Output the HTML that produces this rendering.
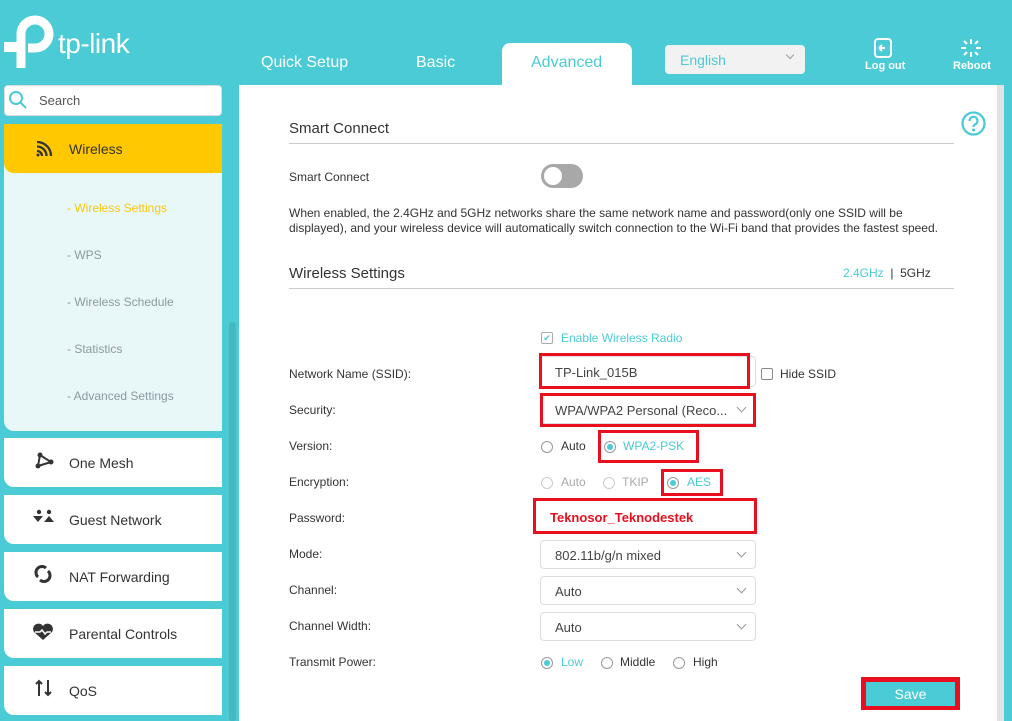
<!DOCTYPE html>
<html><head><meta charset="utf-8"><style>
*{margin:0;padding:0;box-sizing:border-box}
body{width:1012px;height:721px;overflow:hidden;background:#4acbd6;font-family:"Liberation Sans",Arial,sans-serif;position:relative;color:#333}
.a{position:absolute}
.tab{position:absolute;top:54px;color:#fff;font-size:16px}
.side{position:absolute;left:4px;width:218px;background:#fff;border-bottom-left-radius:10px}
.side .t{position:absolute;left:65px;font-size:14px;color:#333}
.sub{position:absolute;left:67px;font-size:12px;color:#8a9aa0}
.lbl{position:absolute;left:289px;font-size:12px;color:#333}
.sel{position:absolute;left:540px;width:216px;height:29px;border:1px solid #ddd;border-radius:4px;font-size:13px;color:#444;padding:7px 0 0 14px}
.chev{position:absolute;right:10px;top:8px;width:7px;height:7px;border-right:1.5px solid #999;border-bottom:1.5px solid #999;transform:rotate(45deg)}
.red{position:absolute;border:3px solid #e8101e}
.rad{position:absolute;width:12px;height:12px;border:1px solid #999;border-radius:50%;background:#fff}
.rad.on::after{content:"";position:absolute;left:2px;top:2px;width:6px;height:6px;border-radius:50%;background:#4acbd6}
.rt{position:absolute;font-size:12px}
</style></head><body>
<!-- logo -->
<svg class="a" style="left:2px;top:14px" width="54" height="56" viewBox="0 0 54 56"><path d="M19 54 V20 A14 14 0 1 1 33 34 H26" fill="none" stroke="#fff" stroke-width="9"/><rect x="2" y="28" width="18" height="10" fill="#fff"/></svg>
<div class="a" style="left:58px;top:28px;font-size:28px;color:#fff;letter-spacing:-0.5px">tp-link</div>
<div class="tab" style="left:261px">Quick Setup</div>
<div class="tab" style="left:416px">Basic</div>
<div class="a" style="left:502px;top:43px;width:130px;height:44px;background:#fff;border-radius:8px 8px 0 0"></div>
<div class="tab" style="left:531px;color:#4acbd6">Advanced</div>
<div class="a" style="left:665px;top:45px;width:140px;height:29px;background:#f2f2f2;border-radius:4px;font-size:14px;color:#4acbd6;padding:7px 0 0 15px">English<div class="chev" style="right:12px;top:7px;width:6px;height:6px"></div></div>
<svg class="a" style="left:873px;top:38px" width="20" height="20" viewBox="0 0 20 20"><rect x="2" y="1" width="16" height="18" rx="3" fill="none" stroke="#fff" stroke-width="2"/><path d="M6 10 L12 10 M6 10 L9 7 M6 10 L9 13" stroke="#fff" stroke-width="2" fill="none"/></svg>
<div class="a" style="left:865px;top:60px;font-size:11px;color:#fff;font-weight:bold">Log out</div>
<svg class="a" style="left:960px;top:38px" width="22" height="20" viewBox="0 0 22 20" stroke="#fff" stroke-width="2"><path d="M11 1v5M11 14v5M1 10h5M16 10h5M4 3l3 3M15 14l3 3M18 3l-3 3M7 14l-3 3"/></svg>
<div class="a" style="left:953px;top:60px;font-size:11px;color:#fff;font-weight:bold">Reboot</div>
<!-- search -->
<div class="a" style="left:4px;top:85px;width:218px;height:31px;background:#fff;border-radius:4px;border:1px solid #ddd"></div>
<svg class="a" style="left:8px;top:90px" width="20" height="20" viewBox="0 0 20 20"><circle cx="8" cy="8" r="6" fill="none" stroke="#4acbd6" stroke-width="2"/><path d="M12.5 12.5L18 18" stroke="#4acbd6" stroke-width="2"/></svg>
<div class="a" style="left:39px;top:93px;font-size:13px;color:#555">Search</div>
<!-- wireless -->
<div class="a" style="left:4px;top:124px;width:218px;height:307px;background:#e8f7f8;border-radius:0 0 0 10px"></div>
<div class="a" style="left:4px;top:124px;width:218px;height:49px;background:#ffc800;border-radius:0 0 0 10px"></div>
<svg class="a" style="left:36px;top:140px" width="17" height="17" viewBox="0 0 17 17" fill="none" stroke="#333" stroke-width="2.3"><path d="M1 2a14 14 0 0 1 14 14M1 6.5a9.5 9.5 0 0 1 9.5 9.5M1 11a5 5 0 0 1 5 5"/><circle cx="2" cy="15" r="1.5" fill="#333" stroke="none"/></svg>
<div class="a" style="left:69px;top:141px;font-size:14px;color:#333">Wireless</div>
<div class="sub" style="top:201px;color:#ffc800">- Wireless Settings</div>
<div class="sub" style="top:248px">- WPS</div>
<div class="sub" style="top:295px">- Wireless Schedule</div>
<div class="sub" style="top:342px">- Statistics</div>
<div class="sub" style="top:389px">- Advanced Settings</div>
<div class="a" style="left:229px;top:322px;width:7px;height:399px;background:#46b8c2;border-radius:3px"></div>
<div class="side" style="top:438px;height:49px"><svg class="a" style="left:30px;top:14px" width="20" height="18" viewBox="0 0 20 18"><path d="M6 3L4 14L17 10Z" fill="none" stroke="#333" stroke-width="2"/><circle cx="6" cy="3" r="2.5" fill="#333"/><circle cx="4" cy="14" r="2.5" fill="#333"/><circle cx="17" cy="10" r="2.5" fill="#333"/></svg><div class="t" style="top:17px">One Mesh</div></div>
<div class="side" style="top:495px;height:49px"><svg class="a" style="left:28px;top:14px" width="24" height="16" viewBox="0 0 24 16" fill="#333"><circle cx="7" cy="3" r="2.2"/><circle cx="17" cy="3" r="2.2"/><path d="M1 7h10l-5 6zM12 13l5-6 5 6z"/></svg><div class="t" style="top:17px">Guest Network</div></div>
<div class="side" style="top:552px;height:49px"><svg class="a" style="left:30px;top:13px" width="18" height="18" viewBox="0 0 18 18" fill="none" stroke="#333" stroke-width="3"><path d="M4 12A6 6 0 0 1 12 3M14 6A6 6 0 0 1 6 15"/></svg><div class="t" style="top:17px">NAT Forwarding</div></div>
<div class="side" style="top:609px;height:49px"><svg class="a" style="left:28px;top:14px" width="22" height="18" viewBox="0 0 22 18"><path d="M11 17L2 9A5 5 0 0 1 11 3A5 5 0 0 1 20 9Z" fill="#333"/><path d="M3 9h5l2-2 3 4 2-2h4" stroke="#fff" stroke-width="1.5" fill="none"/></svg><div class="t" style="top:17px">Parental Controls</div></div>
<div class="side" style="top:666px;height:49px"><svg class="a" style="left:30px;top:13px" width="20" height="18" viewBox="0 0 20 18" fill="none" stroke="#333" stroke-width="2"><path d="M5 17V2M2 5l3-3 3 3M14 1v15M11 13l3 3 3-3"/></svg><div class="t" style="top:17px">QoS</div></div>
<!-- main -->
<div class="a" style="left:239px;top:85px;width:758px;height:636px;background:#fff"></div>
<div class="a" style="left:997px;top:85px;width:7px;height:636px;background:#e2e2e2"></div>
<svg class="a" style="left:961px;top:111px" width="25" height="25" viewBox="0 0 25 25"><circle cx="12.5" cy="12.5" r="11" fill="none" stroke="#4acbd6" stroke-width="2.3"/><path d="M8.5 10a4 4 0 1 1 5.5 3.5c-1.2.6-1.5 1.2-1.5 2.5" fill="none" stroke="#4acbd6" stroke-width="2.3"/><circle cx="12.5" cy="19" r="1.5" fill="#4acbd6"/></svg>
<div class="a" style="left:289px;top:120px;font-size:15px;color:#333">Smart Connect</div>
<div class="a" style="left:289px;top:143px;width:665px;height:1px;background:#ccc"></div>
<div class="lbl" style="top:170px">Smart Connect</div>
<div class="a" style="left:541px;top:164px;width:42px;height:24px;border-radius:12px;background:#a8a8a8"></div>
<div class="a" style="left:544px;top:167px;width:18px;height:18px;border-radius:50%;background:#fff"></div>
<div class="a" style="left:289px;top:206px;font-size:12px;line-height:15px;color:#333;width:670px">When enabled, the 2.4GHz and 5GHz networks share the same network name and password(only one SSID will be displayed), and your wireless device will automatically switch connection to the Wi-Fi band that provides the fastest speed.</div>
<div class="a" style="left:289px;top:265px;font-size:15px;color:#333">Wireless Settings</div>
<div class="a" style="left:843px;top:266px;font-size:12px;color:#4acbd6">2.4GHz <span style="color:#333">&nbsp;|&nbsp; 5GHz</span></div>
<div class="a" style="left:289px;top:288px;width:665px;height:1px;background:#ccc"></div>
<div class="a" style="left:541px;top:332px;width:12px;height:12px;border:1px solid #aaa;border-radius:2px;font-size:9px;color:#4acbd6;line-height:10px;text-align:center">✔</div>
<div class="a" style="left:561px;top:331px;font-size:12px;color:#4acbd6">Enable Wireless Radio</div>
<div class="lbl" style="top:367px">Network Name (SSID):</div>
<div class="sel" style="top:356px;height:31px;padding-top:8px">TP-Link_015B</div>
<div class="red" style="left:539px;top:353px;width:211px;height:36px"></div>
<div class="a" style="left:761px;top:368px;width:12px;height:12px;border:1px solid #888;border-radius:2px"></div>
<div class="a" style="left:780px;top:367px;font-size:12px">Hide SSID</div>
<div class="lbl" style="top:403px">Security:</div>
<div class="sel" style="top:395px">WPA/WPA2 Personal (Reco...<div class="chev"></div></div>
<div class="red" style="left:540px;top:393px;width:216px;height:34px"></div>
<div class="lbl" style="top:439px">Version:</div>
<div class="rad" style="left:541px;top:441px"></div><div class="rt" style="left:561px;top:439px">Auto</div>
<div class="rad on" style="left:604px;top:441px"></div><div class="rt" style="left:623px;top:439px;color:#4acbd6">WPA2-PSK</div>
<div class="red" style="left:598px;top:430px;width:101px;height:33px"></div>
<div class="lbl" style="top:475px">Encryption:</div>
<div class="rad" style="left:541px;top:477px;border-color:#ccc"></div><div class="rt" style="left:561px;top:475px;color:#aaa">Auto</div>
<div class="rad" style="left:603px;top:477px;border-color:#ccc"></div><div class="rt" style="left:622px;top:475px;color:#aaa">TKIP</div>
<div class="rad on" style="left:667px;top:477px"></div><div class="rt" style="left:687px;top:475px;color:#4acbd6">AES</div>
<div class="red" style="left:661px;top:469px;width:62px;height:27px"></div>
<div class="lbl" style="top:511px">Password:</div>
<div class="red" style="left:533px;top:498px;width:224px;height:36px"></div>
<div class="a" style="left:550px;top:510px;font-size:13px;font-weight:bold;color:#e8101e">Teknosor_Teknodestek</div>
<div class="lbl" style="top:547px">Mode:</div>
<div class="sel" style="top:540px">802.11b/g/n mixed<div class="chev"></div></div>
<div class="lbl" style="top:583px">Channel:</div>
<div class="sel" style="top:576px">Auto<div class="chev"></div></div>
<div class="lbl" style="top:619px">Channel Width:</div>
<div class="sel" style="top:612px">Auto<div class="chev"></div></div>
<div class="lbl" style="top:655px">Transmit Power:</div>
<div class="rad on" style="left:541px;top:657px"></div><div class="rt" style="left:561px;top:655px;color:#4acbd6">Low</div>
<div class="rad" style="left:601px;top:657px"></div><div class="rt" style="left:620px;top:655px">Middle</div>
<div class="rad" style="left:673px;top:657px"></div><div class="rt" style="left:693px;top:655px">High</div>
<div class="a" style="left:861px;top:677px;width:99px;height:33px;background:#e8101e"></div>
<div class="a" style="left:866px;top:682px;width:89px;height:24px;background:#4acbd6;color:#fff;font-size:14px;text-align:center;line-height:24px">Save</div>
</body></html>
